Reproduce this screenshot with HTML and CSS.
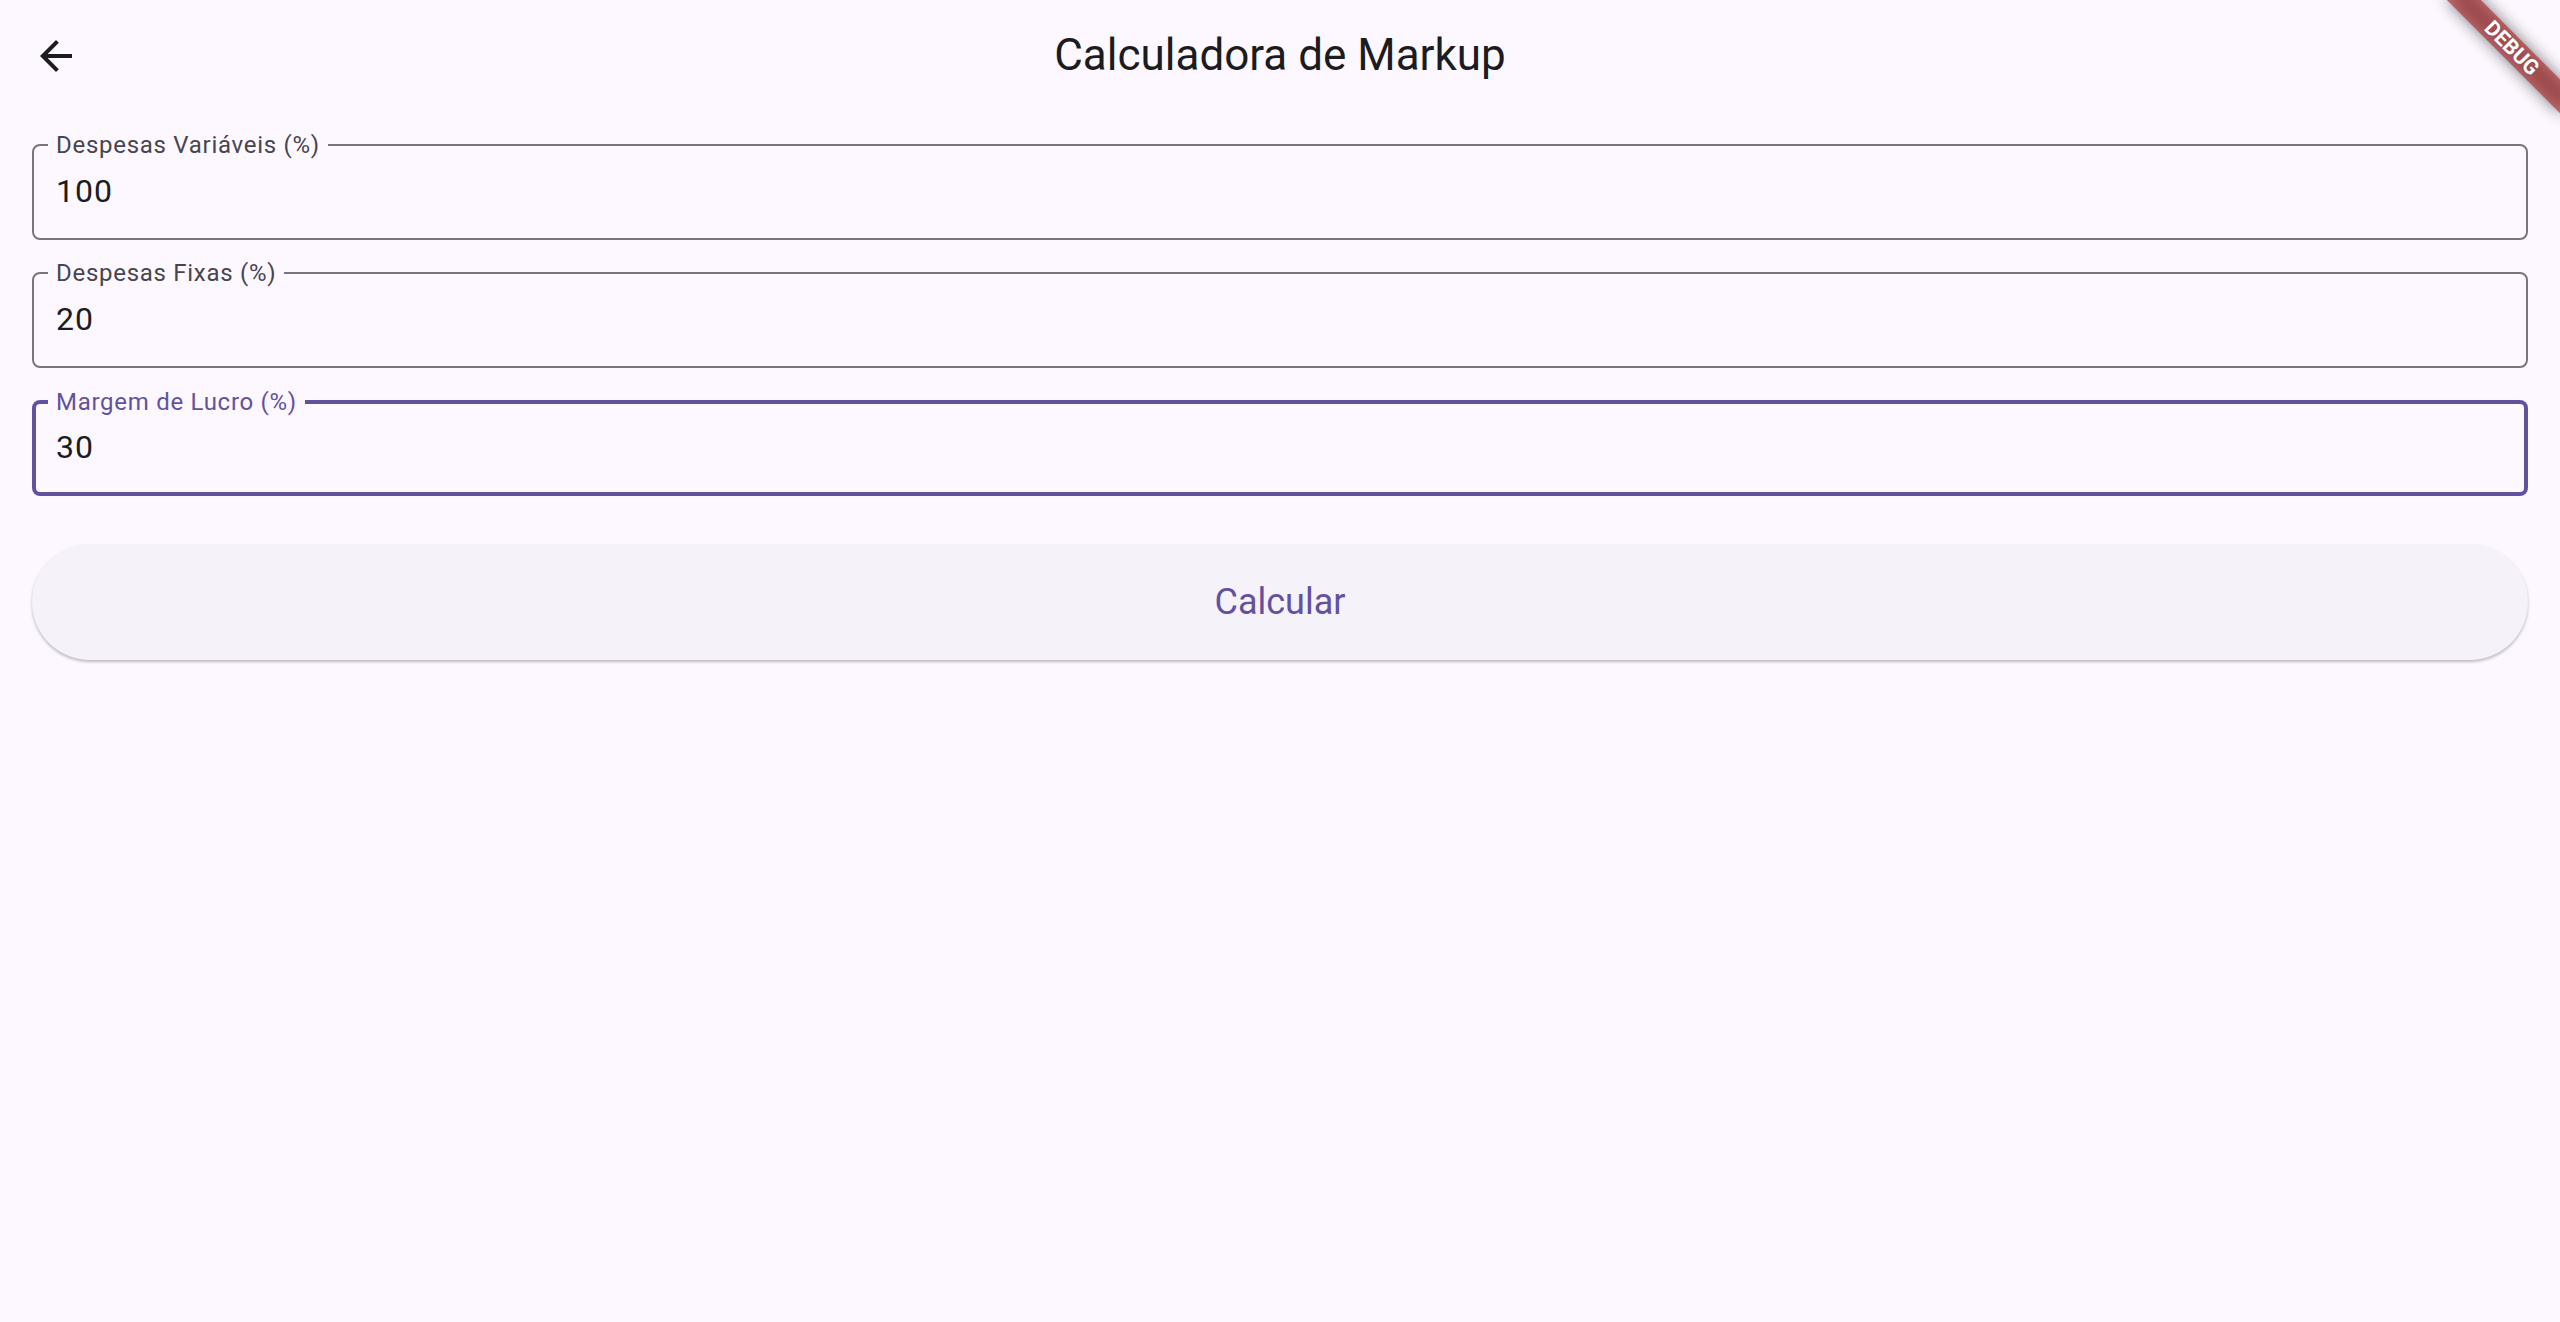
FILE: index.html
```html
<!DOCTYPE html>
<html lang="pt-BR">
<head>
  <meta charset="utf-8">
  <meta name="viewport" content="width=device-width, initial-scale=1">
  <title>Calculadora de Markup</title>
  <link rel="stylesheet" href="styles.css">
</head>
<body>
  <header class="app-bar">
    <button class="back-button" type="button" aria-label="Voltar">
      <svg class="back-icon" viewBox="0 0 24 24" aria-hidden="true">
        <path d="M20 11H7.83l5.59-5.59L12 4l-8 8 8 8 1.41-1.41L7.83 13H20z"/>
      </svg>
    </button>
    <h1 class="title">Calculadora de Markup</h1>
  </header>

  <main>
    <form class="form">
      <div class="field">
        <label class="field-label" for="variaveis">Despesas Variáveis (%)</label>
        <input class="field-input" id="variaveis" type="text" inputmode="decimal" value="100">
      </div>
      <div class="field">
        <label class="field-label" for="fixas">Despesas Fixas (%)</label>
        <input class="field-input" id="fixas" type="text" inputmode="decimal" value="20">
      </div>
      <div class="field field-active">
        <label class="field-label" for="margem">Margem de Lucro (%)</label>
        <input class="field-input" id="margem" type="text" inputmode="decimal" value="30">
      </div>
      <button class="submit" type="button">Calcular</button>
    </form>
  </main>

  <div class="banner">
    <span class="ribbon">DEBUG</span>
  </div>
</body>
</html>
```
FILE: styles.css
```css
:root {
  --surface: #fdf8ff;
  --text: #1c1b20;
  --muted: #48454e;
  --outline: #78757f;
  --primary: #6351a0;
}

* {
  box-sizing: border-box;
}

body {
  margin: 0;
  min-height: 100vh;
  background: var(--surface);
  color: var(--text);
  font-family: Roboto, "Liberation Sans", sans-serif;
}

.app-bar {
  display: grid;
  grid-template-columns: 48px 1fr 48px;
  align-items: center;
  height: 112px;
  padding: 0 32px;
}

.back-button {
  display: flex;
  padding: 0;
  border: 0;
  background: none;
  color: inherit;
  cursor: pointer;
}

.back-icon {
  width: 48px;
  height: 48px;
  fill: currentColor;
}

.title {
  margin: 0;
  padding-bottom: 2px;
  font-size: 44px;
  font-weight: 400;
  line-height: 56px;
  text-align: center;
}

.form {
  display: flex;
  flex-direction: column;
  gap: 32px;
  padding: 32px;
}

.field {
  position: relative;
}

/* The label sits over the outline and interrupts it. */
.field-label {
  position: absolute;
  top: -15px;
  left: 16px;
  padding: 0 8px;
  background: var(--surface);
  color: var(--muted);
  font-size: 24px;
  line-height: 32px;
  letter-spacing: 0.03em;
}

.field-input {
  display: block;
  width: 100%;
  height: 96px;
  padding: 0 22px 2px;
  border: 2px solid var(--outline);
  border-radius: 8px;
  outline: 0;
  background: transparent;
  color: var(--text);
  font: inherit;
  font-size: 32px;
  letter-spacing: 1px;
}

.field-active .field-label {
  top: -14px;
  color: var(--primary);
}

.field-active .field-input {
  padding: 0 20px 2px;
  border: 4px solid var(--primary);
}

.submit {
  height: 116px;
  margin-top: 16px;
  border: 0;
  border-radius: 58px;
  background: #f5f2f9;
  box-shadow: 0 2px 3px rgba(0, 0, 0, 0.25);
  color: var(--primary);
  font: inherit;
  font-size: 36px;
  cursor: pointer;
}

/* Corner ribbon, turned about the window's top right corner. */
.banner {
  position: absolute;
  top: 0;
  right: 0;
  width: 160px;
  height: 160px;
  overflow: hidden;
  pointer-events: none;
}

.ribbon {
  position: absolute;
  top: 56px;
  right: -80px;
  width: 160px;
  height: 24px;
  color: #fff;
  font-size: 21px;
  font-weight: 700;
  line-height: 24px;
  text-align: center;
  transform: rotate(45deg);
  transform-origin: 50% -56px;
}

/* The translucent red lies over its own soft shadow. */
.ribbon::before,
.ribbon::after {
  content: "";
  position: absolute;
  inset: 0;
  z-index: -1;
}

.ribbon::before {
  background: rgba(0, 0, 0, 0.5);
  filter: blur(8px);
}

.ribbon::after {
  background: rgba(170, 41, 42, 0.63);
}
```
